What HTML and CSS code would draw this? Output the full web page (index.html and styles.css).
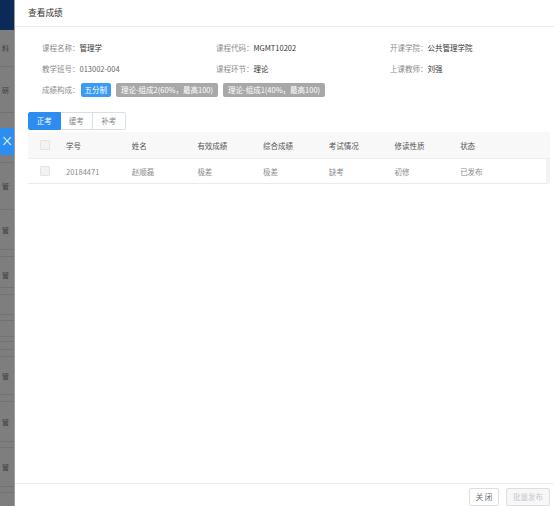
FILE: index.html
```html
<!DOCTYPE html>
<html lang="zh-CN">
<head>
<meta charset="utf-8">
<title>查看成绩</title>
<link rel="stylesheet" href="styles.css">
</head>
<body>
<div class="page">
  <aside class="side">
    <div class="side-top"></div>
    <div class="si h37"><span>料</span></div>
    <div class="si h46"><span>研</span></div>
    <div class="sp h15"></div>
    <div class="side-close">×</div>
    <div class="si h8"></div>
    <div class="si h47"><span>管</span></div>
    <div class="si h40"><span>管</span></div>
    <div class="si h7"></div>
    <div class="si h31 low"><span>管</span></div>
    <div class="si h7"></div>
    <div class="si h20"></div>
    <div class="si h6"></div>
    <div class="si h16"></div>
    <div class="si h5"></div>
    <div class="si h8"></div>
    <div class="si h7"></div>
    <div class="si h38"><span>管</span></div>
    <div class="si h7"></div>
    <div class="si h40"><span>管</span></div>
    <div class="si h6"></div>
    <div class="si h39"><span>管</span></div>
    <div class="si h6"></div>
  </aside>
  <main class="modal">
    <header class="modal-head">查看成绩</header>
    <section class="modal-body">
      <div class="info">
        <div class="cell"><span class="lbl">课程名称：</span><span class="val">管理学</span></div>
        <div class="cell"><span class="lbl">课程代码：</span><span class="val">MGMT10202</span></div>
        <div class="cell"><span class="lbl">开课学院：</span><span class="val">公共管理学院</span></div>
        <div class="cell"><span class="lbl">教学班号：</span><span class="val light">013002-004</span></div>
        <div class="cell"><span class="lbl">课程环节：</span><span class="val">理论</span></div>
        <div class="cell"><span class="lbl">上课教师：</span><span class="val">刘强</span></div>
        <div class="cell wide"><span class="lbl">成绩构成：</span>
          <span class="tag blue">五分制</span>
          <span class="tag gray">理论-组成2(60%，最高100)</span>
          <span class="tag gray">理论-组成1(40%，最高100)</span>
        </div>
      </div>
      <div class="tabs">
        <span class="tab active">正考</span>
        <span class="tab">缓考</span>
        <span class="tab">补考</span>
      </div>
      <div class="table">
        <div class="row head">
          <div class="c chk"><i class="box"></i></div>
          <div class="c">学号</div>
          <div class="c">姓名</div>
          <div class="c">有效成绩</div>
          <div class="c">综合成绩</div>
          <div class="c">考试情况</div>
          <div class="c">修读性质</div>
          <div class="c">状态</div>
          <div class="c gut"></div>
        </div>
        <div class="row body">
          <div class="c chk"><i class="box"></i></div>
          <div class="c">20184471</div>
          <div class="c">赵顺磊</div>
          <div class="c">极差</div>
          <div class="c">极差</div>
          <div class="c">缺考</div>
          <div class="c">初修</div>
          <div class="c">已发布</div>
          <div class="c gut"></div>
        </div>
      </div>
    </section>
    <footer class="modal-foot">
      <span class="btn close">关 闭</span>
      <span class="btn disabled">批量发布</span>
    </footer>
  </main>
</div>
</body>
</html>
```

FILE: styles.css
```css
html, body {
  margin: 0;
  padding: 0;
  width: 554px;
  height: 506px;
  overflow: hidden;
  background: #fff;
  font-family: "Noto Sans CJK SC", "Noto Sans", sans-serif;
  font-size: 7.5px;
}

.page {
  display: flex;
  width: 554px;
  height: 506px;
}

/* dimmed sidebar */
.side {
  width: 15px;
  flex: none;
  background: #7e7e7e;
  display: flex;
  flex-direction: column;
  overflow: hidden;
  border-right: 1px solid #9c9c9c;
  box-sizing: border-box;
}
.side-top {
  height: 30px;
  flex: none;
  background: #0c2a57;
}
.si {
  flex: none;
  box-sizing: border-box;
  border-bottom: 1px solid #727272;
  display: flex;
  align-items: center;
  justify-content: flex-end;
  padding-right: 5px;
  white-space: nowrap;
  color: #3c3c3c;
  font-size: 7px;
}
.si span { flex: none; }
.si.low { align-items: flex-end; padding-bottom: 7px; }
.sp { flex: none; }
.side-close {
  flex: none;
  height: 27px;
  background: #2d8ef2;
  color: #fff;
  font-size: 15px;
  line-height: 27px;
  text-align: center;
  font-family: "DejaVu Sans", sans-serif;
  font-weight: 300;
}
.h5 { height: 5px; } .h6 { height: 6px; } .h7 { height: 7px; } .h8 { height: 8px; }
.h15 { height: 15px; } .h16 { height: 16px; } .h20 { height: 20px; }
.h31 { height: 31px; } .h37 { height: 37px; } .h38 { height: 38px; }
.h39 { height: 39px; } .h40 { height: 40px; } .h46 { height: 46px; } .h47 { height: 47px; }

/* modal */
.modal {
  flex: 1;
  display: flex;
  flex-direction: column;
  min-width: 0;
}
.modal-head {
  height: 26px;
  line-height: 26px;
  padding-left: 13px;
  font-size: 8.7px;
  color: #333;
  border-bottom: 1px solid #ececec;
  flex: none;
}
.modal-body {
  flex: 1;
  padding: 10px 4px 0 13px;
}
.info {
  display: grid;
  grid-template-columns: 174px 174px 1fr;
  grid-auto-rows: 21px;
  padding-left: 14px;
}
.cell {
  display: flex;
  align-items: center;
  white-space: nowrap;
}
.cell.wide { grid-column: 1 / 4; }
.lbl { color: #8a8a8a; }
.val { color: #333; }
.val.light { color: #666; }
.tag {
  display: inline-block;
  height: 14px;
  line-height: 14px;
  border-radius: 2px;
  color: #fff;
}
.tag.blue { background: #3a9bf4; margin-left: 1px; padding: 0 4px; }
.tag.gray { background: #a8a8a8; margin-left: 5px; padding: 0 5px; }

.tabs {
  display: flex;
  margin-top: 12px;
  height: 18px;
}
.tab {
  width: 32.5px;
  box-sizing: border-box;
  border: 1px solid #dcdee2;
  border-left: none;
  text-align: center;
  line-height: 16px;
  color: #8a8a8a;
}
.tab:first-child { border-left: 1px solid #dcdee2; border-radius: 2px 0 0 2px; }
.tab:last-child { border-radius: 0 2px 2px 0; }
.tab.active { background: #2d8cf0; border-color: #2d8cf0; color: #fff; }

.table {
  margin-top: 2px;
}
.row {
  display: grid;
  grid-template-columns: 34px repeat(6, 65.7px) 1fr 4px;
  align-items: stretch;
}
.row.head { height: 27px; background: #f8f8f9; color: #555; }
.row.body { height: 25px; color: #8a8a8a; }
.c {
  display: flex;
  align-items: center;
  padding-left: 4px;
  box-sizing: border-box;
  white-space: nowrap;
  border-bottom: 1px solid #e8eaec;
}
.row.head .c { border-bottom: 1px solid #efefef; }
.c.chk { justify-content: center; padding-left: 0; }
.c.gut { padding: 0; background: #f3f3f3; border-bottom: none; }
.row.head .c.gut { background: #f8f8f9; }
.box {
  display: block;
  width: 8px;
  height: 8px;
  border: 1px solid #e3e3e3;
  background: #f3f3f3;
  border-radius: 1px;
}

.modal-foot {
  flex: none;
  height: 23px;
  border-top: 1px solid #ececec;
  display: flex;
  justify-content: flex-end;
  align-items: flex-start;
  gap: 7px;
  padding: 4px 4px 0 0;
  box-sizing: border-box;
}
.btn {
  height: 18px;
  line-height: 16px;
  box-sizing: border-box;
  border: 1px solid #dcdee2;
  border-radius: 2px;
  text-align: center;
  color: #666;
  background: #fff;
  white-space: nowrap;
}
.btn.close { width: 30px; }
.btn.disabled { width: 44px; color: #c5c8ce; background: #f7f7f7; }
```
